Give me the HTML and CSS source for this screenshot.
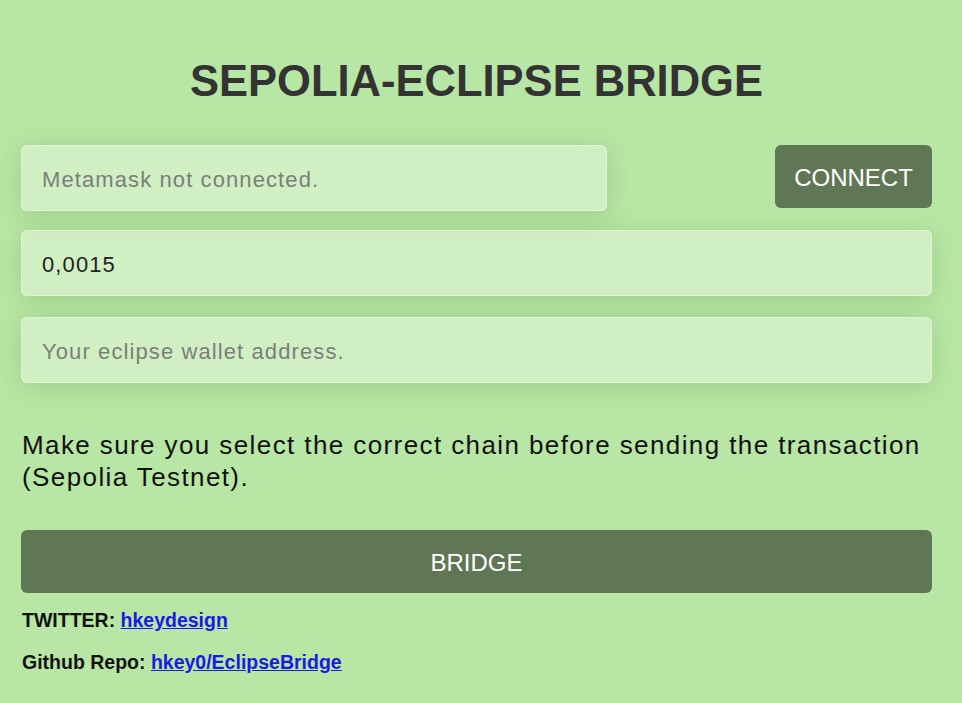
FILE: index.html
```html
<!DOCTYPE html>
<html lang="en">
<head>
  <meta charset="UTF-8">
  <title>Sepolia-Eclipse Bridge</title>
  <link rel="stylesheet" href="styles.css">
</head>
<body>
  <div class="container">
    <h1>SEPOLIA-ECLIPSE BRIDGE</h1>

    <div class="row">
      <input id="account" class="field account" placeholder="Metamask not connected." readonly>
      <button class="btn connect">CONNECT</button>
    </div>

    <input id="amount" class="field amount" value="0,0015">
    <input id="wallet" class="field" placeholder="Your eclipse wallet address.">

    <p class="note">Make sure you select the correct chain before sending the transaction (Sepolia Testnet).</p>

    <button class="btn bridge">BRIDGE</button>

    <p class="link"><b>TWITTER:</b> <a href="#">hkeydesign</a></p>
    <p class="link"><b>Github Repo:</b> <a href="#">hkey0/EclipseBridge</a></p>
  </div>
</body>
</html>
```

FILE: styles.css
```css
body { margin: 0; background: #b8e6a4; font-family: "Liberation Sans", Arial, sans-serif; color: #111; }
.container { width: 911px; margin-left: 21px; }
h1 { text-align: center; font-size: 43.5px; color: #333; margin: 0; padding-top: 59px; height: 86px; line-height: 44px; }
.row { display: flex; justify-content: space-between; align-items: flex-start; }
.field { display: block; box-sizing: border-box; width: 100%; height: 66px; margin: 0 0 20px; padding: 3px 20px 0; font-family: inherit; font-size: 22px; letter-spacing: 1.1px; color: #222; background: #d0efc3; border: 1px solid rgba(255,255,255,0.35); border-radius: 6px; box-shadow: 0 4px 24px rgba(60,110,40,0.2); outline: none; }
.field::placeholder { color: #7c7f7a; }
.account { width: 586px; margin-bottom: 19px; }
.amount { margin-bottom: 21px; }
.btn { font-family: inherit; background: #5f7755; color: #fff; border: none; border-radius: 6px; cursor: pointer; font-size: 24px; padding: 3px 0 0; }
.connect { width: 157px; height: 63px; }
.note { font-size: 26px; letter-spacing: 1.4px; line-height: 32px; margin: 46px 0 37px 1px; }
.bridge { display: block; width: 100%; height: 63px; margin-bottom: 16px; }
.link { font-size: 19.5px; margin: 0 0 20px 1px; line-height: 22px; }
.link a { color: #1a1ae6; font-weight: bold; }
```
